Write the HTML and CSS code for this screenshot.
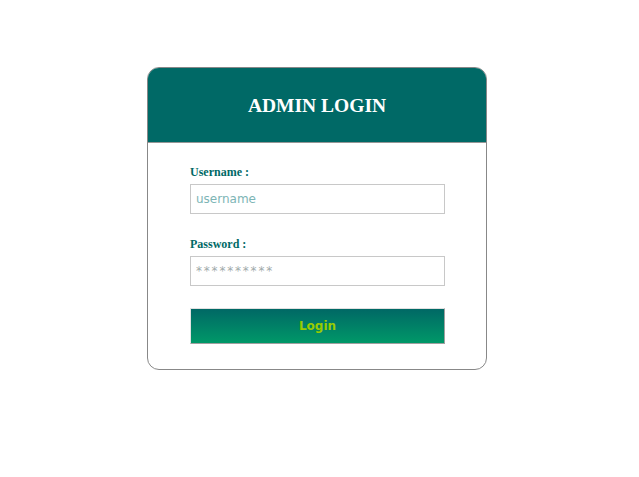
FILE: index.html
```html
<!doctype html>
<html lang="en">

<head>
    <title>Admin Login</title>
    <meta charset="utf-8">
    <link rel="stylesheet" href="styles.css">
</head>

<body>
    <div id="loginBoks">
        <div class="topp">
            <h1>ADMIN LOGIN</h1>
        </div>
        <form class="skjema">
            <label for="brukernavn">Username :</label>
            <input type="text" id="brukernavn" placeholder="username">
            <label for="passord">Password :</label>
            <input type="password" id="passord" placeholder="**********">
            <button type="button" id="loggInn">Login</button>
        </form>
    </div>
</body>

</html>
```

FILE: styles.css
```css
body {
    background: white;
    margin: 0;
    font-family: 'Liberation Serif', 'Times New Roman', serif;
}

#loginBoks {
    width: 338px;
    margin-top: 67px;
    margin-left: 147px;
    border: 1px solid rgb(136, 136, 136);
    border-radius: 12px;
    overflow: hidden;
    background-color: white;
}

.topp {
    background-color: rgb(0, 105, 102);
    height: 74px;
    border-bottom: 1px solid rgb(150, 150, 150);
    display: flex;
    align-items: center;
    justify-content: center;
}

.topp h1 {
    margin: 0;
    color: white;
    font-size: 19.5px;
    font-weight: bold;
    padding-top: 1px;
}

.skjema {
    display: flex;
    flex-direction: column;
    padding: 21px 41px 25px 42px;
}

label {
    color: rgb(0, 105, 102);
    font-weight: bold;
    font-size: 12px;
    line-height: 16px;
    margin-bottom: 4px;
}

input {
    box-sizing: border-box;
    width: 255px;
    height: 30px;
    margin: 0 0 22px 0;
    padding: 0 5px;
    border: 1px solid rgb(200, 200, 200);
    font-family: 'DejaVu Sans', Verdana, sans-serif;
    font-size: 12px;
    color: rgb(60, 60, 60);
    outline: none;
}

#brukernavn::placeholder {
    color: rgb(125, 181, 181);
}

#passord::placeholder {
    color: rgb(160, 170, 170);
    letter-spacing: 1.8px;
}

button {
    box-sizing: border-box;
    width: 255px;
    height: 36px;
    padding: 0 0 1px 0;
    border: 1px solid;
    border-color: rgb(225, 225, 225) rgb(160, 160, 160) rgb(160, 160, 160) rgb(225, 225, 225);
    background: linear-gradient(rgb(0, 104, 101), rgb(0, 152, 104));
    color: rgb(153, 204, 0);
    font-family: 'DejaVu Sans', Tahoma, sans-serif;
    font-weight: bold;
    font-size: 12px;
    cursor: pointer;
}
```
